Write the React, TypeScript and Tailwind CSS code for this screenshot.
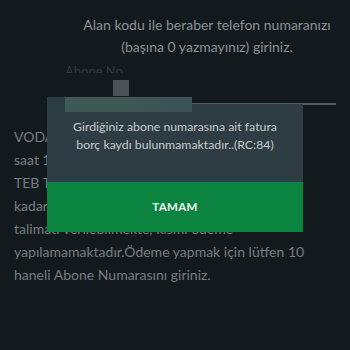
export default function App() {
  const lines = [
    "VODAFONE faturalarınız için ödemeler",
    "saat 10:00 ile 23:59 arasında yapılabilir.",
    "TEB Telefon Talimatı son ödeme tarihine",
    "kadar yapılabilir. Tüm faturalar için",
    "talimatı verilebilmekte, kısmi ödeme",
    "yapılamamaktadır.Ödeme yapmak için lütfen 10",
    "haneli Abone Numarasını giriniz.",
  ];

  return (
    <div className="relative w-[350px] h-[350px] overflow-hidden bg-[#131a1e] font-['Lato',sans-serif] flex flex-col">
      <div className="pt-[14px] pl-[64px] flex flex-col items-center text-[14px] leading-[22px] text-[#8a9095]">
        <p>Alan kodu ile beraber telefon numaranızı</p>
        <p>(başına 0 yazmayınız) giriniz.</p>
      </div>

      <div className="mt-[5px] h-[10px] overflow-hidden pl-[65px] text-[13px] leading-[16px] text-[#30393e]">
        Abone No
      </div>

      <div className="mt-[52px] pl-[14px] flex flex-col text-[14px] leading-[23px] text-[#767c80]">
        {lines.map((l) => (
          <p key={l} className="whitespace-nowrap">
            {l}
          </p>
        ))}
      </div>

      {/* glitchy input remnants */}
      <div className="absolute left-[113px] top-[80px] w-[16px] h-[16px] bg-[#4c5256]" />
      <div className="absolute left-[185px] top-[103px] w-[151px] h-[2px] bg-[#4e5f5c]" />

      <div className="absolute left-[47px] top-[104px] w-[256px] flex flex-col">
        <div className="h-[78px] bg-[#2e3c43] pt-[14px] flex flex-col items-center text-[12.3px] leading-[18px] text-[#c6cbcd]">
          <p>Girdiğiniz abone numarasına ait fatura</p>
          <p>borç kaydı bulunmamaktadır..(RC:84)</p>
        </div>
        <div className="h-[50px] flex items-center justify-center bg-[#0a843f] text-[11.5px] font-bold tracking-[0.3px] text-[#eef3ef]">
          TAMAM
        </div>
      </div>

      <div className="absolute left-[47px] top-[97px] w-[18px] h-[15px] bg-[#2a3c44]" />
      <div className="absolute left-[65px] top-[97px] w-[127px] h-[15px] bg-gradient-to-r from-[#3e5854] via-[#3e5854] to-[#3a5252]" />
    </div>
  );
}
